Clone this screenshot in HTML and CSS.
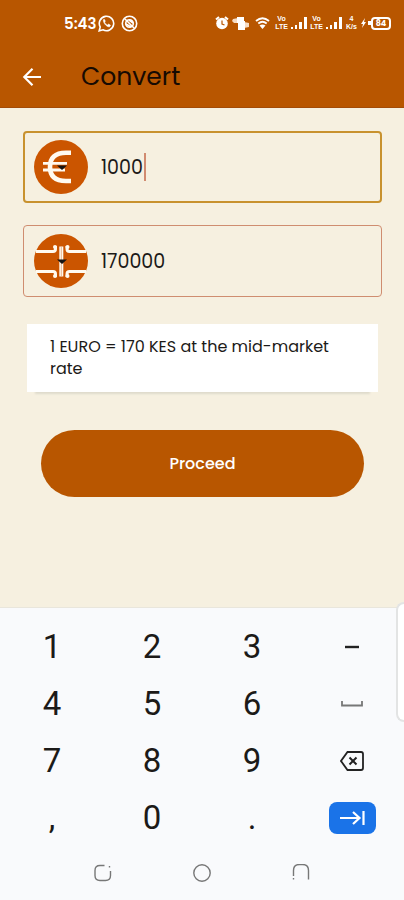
FILE: index.html
```html
<!DOCTYPE html>
<html lang="en">
<head>
  <meta charset="UTF-8">
  <title>Convert</title>
  <meta name="viewport" content="width=device-width, initial-scale=1.0">
  <link rel="stylesheet" href="styles.css">
</head>
<body>

<header class="top">
  <div class="status-bar">
    <div class="status-left">
      <span class="time">5:43</span>
      <svg width="17" height="17" viewBox="0 0 17 17" fill="none" stroke="#fff" stroke-width="1.6">
        <path d="M1.2 15.8l1-3.8A7.2 7.2 0 1 1 5 14.8z"/>
        <path d="M5.3 4.8c.6-.8 1.2-.7 1.5.1l.5 1.3-.7 1c.7 1.4 1.5 2.1 2.9 2.8l1-.9 1.7.8c.4.3.2 1.3-.6 1.8-1.8.9-6.6-2.9-6.3-6.9z" fill="#fff" stroke-width=".5"/>
      </svg>
      <svg class="call-icon" width="17" height="17" viewBox="0 0 17 17" fill="none" stroke="#fff" stroke-width="1.6">
        <circle cx="8.5" cy="8.5" r="7.2"/>
        <circle cx="8.5" cy="8.5" r="3.8"/>
        <path d="M4 4l9 9M5 9l5 3M8 5l4 3"/>
      </svg>
    </div>
    <div class="status-right">
      <svg width="14" height="14" viewBox="0 0 14 14">
        <circle cx="7" cy="7.5" r="5.8" fill="#fff"/>
        <path d="M1 3.6l3-2.6M13 3.6L10 1" stroke="#fff" stroke-width="2"/>
        <path d="M7 4.5v3.5l2.5 1" fill="none" stroke="#b85600" stroke-width="1.2"/>
      </svg>
      <svg width="18" height="15" viewBox="0 0 18 15" fill="#fff">
        <path d="M5 1h7v4h1v9H6V7H5z"/>
        <path d="M1 3l5-1v5H2L0 5zM12 6l5 1v4l-5 1z" fill="#f6dcc4"/>
        <path d="M5 1h7v4h1v9H6V7H5z"/>
      </svg>
      <svg class="wifi" width="15" height="12" viewBox="0 0 15 12" fill="none" stroke="#fff" stroke-width="1.8">
        <path d="M1 4q6.500-5.500 13 0M3.300 6.500q4.200-3.500 8.400 0"/>
        <path d="M4.500 8.400q3-1.800 6 0L7.500 12z" fill="#fff" stroke="none"/>
      </svg>
      <span class="tiny">Vo<br>LTE</span>
      <svg width="16" height="14" viewBox="0 0 16 14" fill="#fff">
        <path d="M0 11h2v2H0zM4 9h2v4H4zM8 6h3v7H8zM13 1h3v12h-3z"/>
      </svg>
      <span class="tiny">Vo<br>LTE</span>
      <svg width="16" height="14" viewBox="0 0 16 14" fill="#fff">
        <path d="M0 11h2v2H0zM4 9h2v4H4zM8 6h3v7H8zM13 1h3v12h-3z"/>
      </svg>
      <span class="tiny speed">4<br>K/s</span>
      <span class="battery">
        <svg width="10" height="12" viewBox="0 0 10 12" fill="#fff"><path d="M4 1L0 7h2l-1 4 4-6H3zM7 4h3v4H7z"/></svg>
        <span class="level">84</span>
      </span>
    </div>
  </div>
  <div class="app-bar">
    <a href="#" class="back" aria-label="Back">
      <svg width="20" height="20" viewBox="0 0 20 20" fill="none" stroke="#fff" stroke-width="2.2">
        <path d="M19 10H3M10.500 1.800L2.300 10l8.200 8.200"/>
      </svg>
    </a>
    <h1>Convert</h1>
  </div>
</header>

<main>
  <div class="field active">
    <label class="currency">
      <svg width="54" height="54" viewBox="0 0 54 54">
        <circle cx="27" cy="27" r="27" fill="#cb5500"/>
        <path d="M37 12.800h-5Q16 13 16 27t16 14h5" fill="none" stroke="#fffaf0" stroke-width="4.600"/>
        <path d="M9 23.300h24M9 30h22" stroke="#fffaf0" stroke-width="2.800"/>
        <path d="M23 25.500h10l-5 4.500z" fill="#161310"/>
      </svg>
      <select aria-label="From currency"><option>EUR</option></select>
    </label>
    <input type="text" class="amount from" aria-label="Amount in EUR" inputmode="decimal" value="1000">
    <span class="caret"></span>
  </div>

  <div class="field">
    <label class="currency">
      <svg width="54" height="54" viewBox="0 0 54 54">
        <circle cx="27" cy="27" r="27" fill="#cb5500"/>
        <g fill="none" stroke="#fffaf0" stroke-width="3">
          <path d="M2 17.500h17q2.500 0 2.500-2.500v-3M52 17.500H35.500q-2.500 0-2.500-2.500v-3"/>
          <path d="M2 37.500h17q2.500 0 2.500 2.500v3M52 37.500H35.500q-2.500 0-2.500 2.500v3"/>
          <path d="M27.300 12.500v30" stroke-width="4"/>
        </g>
        <g fill="#fffaf0">
          <circle cx="21" cy="13" r="2"/>
          <circle cx="33.500" cy="13" r="2"/>
          <circle cx="21" cy="42" r="2"/>
          <circle cx="33.500" cy="42" r="2"/>
        </g>
        <path d="M27.300 13v29" stroke="#e9b48c" stroke-width="1"/>
        <path d="M23 25.500h10l-5 4.500z" fill="#161310"/>
      </svg>
      <select aria-label="To currency"><option>KES</option></select>
    </label>
    <input type="text" class="amount" aria-label="Amount in KES" inputmode="decimal" value="170000">
  </div>

  <p class="rate">1 EURO = 170 KES at the mid-market rate</p>

  <button type="button" class="proceed">Proceed</button>
</main>

<section class="keyboard">
  <div class="edge-panel"></div>
  <div class="keys">
    <button type="button">1</button>
    <button type="button">2</button>
    <button type="button">3</button>
    <button type="button" aria-label="Minus">
      <svg width="14" height="4" viewBox="0 0 14 4"><path d="M0 2h14" stroke="#222" stroke-width="2.400"/></svg>
    </button>
    <button type="button">4</button>
    <button type="button">5</button>
    <button type="button">6</button>
    <button type="button" aria-label="Space">
      <svg width="22" height="6" viewBox="0 0 22 6"><path d="M1 0v4.500h20V0" fill="none" stroke="#777" stroke-width="1.800"/></svg>
    </button>
    <button type="button">7</button>
    <button type="button">8</button>
    <button type="button">9</button>
    <button type="button" aria-label="Delete">
      <svg width="24" height="20" viewBox="0 0 24 20" fill="none" stroke="#222" stroke-width="1.800">
        <path d="M7.500 1H21q2 0 2 2v14q0 2-2 2H7.500L1 10z"/>
        <path d="M9.500 6.500l7 7M16.500 6.500l-7 7" stroke-width="2"/>
      </svg>
    </button>
    <button type="button">,</button>
    <button type="button">0</button>
    <button type="button">.</button>
    <button type="button" aria-label="Next">
      <span class="next">
        <svg width="25" height="16" viewBox="0 0 25 16" fill="none" stroke="#fff" stroke-width="2.200">
          <path d="M0 8h19M13 2l6.500 6-6.500 6M23.500 1v14"/>
        </svg>
      </span>
    </button>
  </div>
  <nav class="nav-bar">
    <a href="#" aria-label="Recent apps">
      <svg width="18" height="18" viewBox="0 0 18 18" fill="none" stroke="#777" stroke-width="1.400">
        <path d="M10.500 1.500H6Q1 1.500 1 6.500v5q0 5 5 5h5.500q5 0 5-5V7M15.500 2v1.600"/>
      </svg>
    </a>
    <a href="#" aria-label="Home">
      <svg width="18" height="18" viewBox="0 0 18 18" fill="none" stroke="#777" stroke-width="1.400">
        <circle cx="9" cy="9" r="8.200"/>
      </svg>
    </a>
    <a href="#" aria-label="Back">
      <svg width="18" height="18" viewBox="0 0 18 18" fill="none" stroke="#777" stroke-width="1.400">
        <path d="M1.500 15.500V14M1.500 12V6.500q0-6 6-6h3q6 0 6 6v9"/>
      </svg>
    </a>
  </nav>
</section>

</body>
</html>
```
FILE: styles.css
```css
* { box-sizing: border-box; }
body {
  font-family: Poppins, Inter, sans-serif;
  margin: 0;
  min-height: 100vh;
  display: flex;
  flex-direction: column;
  background: #f6f0e0;
  color: #1c1a18;
  overflow-x: hidden;
}
svg {
  display: block;
  flex: none;
}
button, input, select {
  font-family: inherit;
  color: inherit;
}

/* Header */
.top {
  background: #b85600;
  height: 108px;
  border-bottom: 1px solid #a34c08;
}
.status-bar {
  height: 46px;
  padding: 0 13px 0 64px;
  display: flex;
  justify-content: space-between;
  align-items: center;
  color: #fff;
}
.status-left, .status-right, .battery {
  display: flex;
  align-items: center;
}
.status-left { gap: 4px; }
.status-right { gap: 3px; }
.time {
  font-size: 15px;
  font-weight: 600;
  width: 30px;
  white-space: nowrap;
}
.call-icon { margin-left: 2px; }
.wifi { margin: 0 2px; }
.tiny {
  font-family: "Liberation Sans", sans-serif;
  font-size: 7px;
  line-height: 8px;
  font-weight: 700;
  width: 13px;
  white-space: nowrap;
  text-align: center;
}
.level {
  border: 2px solid #fff;
  border-radius: 4px;
  width: 20px;
  height: 13px;
  font-size: 8px;
  line-height: 9px;
  font-weight: 700;
  text-align: center;
}
.app-bar {
  height: 61px;
  padding: 0 22px;
  display: flex;
  align-items: center;
  gap: 39px;
}
h1 {
  margin: 0;
  font-size: 25px;
  font-weight: 400;
  color: #160a02;
}

/* Form */
main {
  flex: 1;
  padding: 23px 22px 0 23px;
}
.field {
  height: 72px;
  padding: 0 10px;
  margin-bottom: 22px;
  border: 1px solid #cf8d70;
  border-radius: 4px;
  display: flex;
  align-items: center;
  gap: 13px;
}
.field.active {
  border: 2px solid #c8922f;
  padding: 0 9px;
}
.currency {
  position: relative;
  flex: none;
}
.currency select {
  position: absolute;
  inset: 0;
  width: 100%;
  opacity: 0;
}
.amount {
  flex: 1;
  min-width: 0;
  border: none;
  padding: 0;
  background: none;
  font-size: 19px;
  outline: none;
}
.amount.from {
  flex: none;
  width: 43px;
}
.caret {
  width: 2px;
  height: 28px;
  margin-left: -13px;
  background: #d18b70;
}
.rate {
  margin: 27px 4px 38px;
  padding: 12px 23px;
  background: #fff;
  font-size: 16px;
  line-height: 22px;
  box-shadow: 0 10px 2px -8px #dedbcc;
}
.proceed {
  display: block;
  width: calc(100% - 36px);
  height: 67px;
  margin: 0 auto 24px;
  border: none;
  border-radius: 34px;
  background: #b85600;
  color: #fff;
  font-size: 16px;
  font-weight: 500;
  cursor: pointer;
}

/* Keyboard */
.keyboard {
  position: relative;
  background: #f9fafc;
  border-top: 1px solid #e9e6dc;
  padding-top: 10px;
}
.keys {
  display: grid;
  grid-template-columns: repeat(4, 1fr);
  grid-auto-rows: 57px;
  padding: 0 2px;
}
.keys button {
  border: none;
  padding: 0;
  background: none;
  font-family: Roboto, sans-serif;
  font-size: 33px;
  display: flex;
  align-items: center;
  justify-content: center;
}
.next {
  width: 47px;
  height: 32px;
  border-radius: 8px;
  background: #1a73e8;
  display: flex;
  align-items: center;
  justify-content: center;
}
.nav-bar {
  display: grid;
  grid-template-columns: repeat(3, 1fr);
  padding: 0 53px;
  height: 54px;
}
.nav-bar a {
  display: flex;
  align-items: center;
  justify-content: center;
}
/* handle that peeks in from the screen edge */
.edge-panel {
  position: absolute;
  top: -6px;
  right: 0;
  width: 8px;
  height: 120px;
  background: #fff;
  border: 2px solid #e3e4e4;
  border-right: none;
  border-radius: 8px 0 0 8px;
}
```
